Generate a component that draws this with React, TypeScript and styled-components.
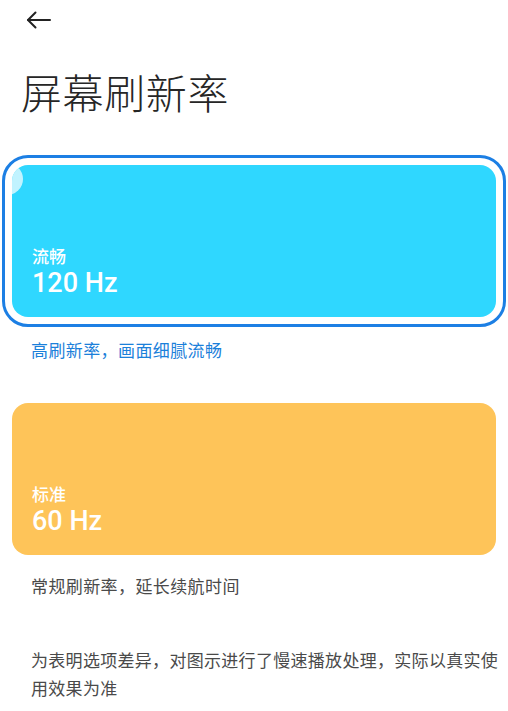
import styled, { createGlobalStyle } from "styled-components";

const GlobalStyle = createGlobalStyle`
    html, body {
        margin: 0;
        padding: 0;
        background: #ffffff;
    }
    body {
        font-family: Roboto, "Noto Sans", "Noto Sans CJK SC", sans-serif;
        -webkit-font-smoothing: antialiased;
    }
`

const Page = styled.div`
    width: 508px;
    min-height: 711px;
    box-sizing: border-box;
    padding: 0 12px;
    color: #222;
`

const Header = styled.div`
    display: flex;
    align-items: center;
    height: 20px;
    padding: 10px 0 0 14px;
`

const BackButton = styled.button`
    display: flex;
    padding: 0;
    border: none;
    background: none;
    color: #222;
    cursor: pointer;
`

const Title = styled.h1`
    margin: 37px 0 0 9px;
    font-family: "Noto Sans CJK SC", sans-serif;
    font-size: 41px;
    line-height: 48px;
    font-weight: 300;
    letter-spacing: 0.6px;
    color: #262626;
`

const Ring = styled.div<{ $active: boolean }>`
    margin: ${p => p.$active ? "40px -10px 0" : "42px 0 0"};
    padding: ${p => p.$active ? "7px" : "0"};
    border: ${p => p.$active ? "3px solid #1c7fe4" : "none"};
    border-radius: 26px;
`

const Card = styled.div<{ $color: string, $bubble?: boolean }>`
    position: relative;
    overflow: hidden;
    height: 152px;
    box-sizing: border-box;
    display: flex;
    flex-direction: column;
    justify-content: flex-end;
    padding: 0 20px 18px;
    border-radius: 16px;
    background: ${p => p.$color};
    color: #fff;
    &::before {
        content: "";
        display: ${p => p.$bubble ? "block" : "none"};
        position: absolute;
        left: -21px;
        top: -2px;
        width: 32px;
        height: 32px;
        border-radius: 50%;
        background: rgba(230, 250, 255, 0.8);
    }
`

const Label = styled.div`
    font-family: "Noto Sans CJK SC", sans-serif;
    font-size: 17px;
    line-height: 22px;
    font-weight: 500;
`

const Value = styled.div`
    font-family: Roboto, "Noto Sans", sans-serif;
    font-size: 27px;
    line-height: 32px;
    font-weight: 500;
`

const Caption = styled.p<{ $accent?: boolean }>`
    margin: ${p => p.$accent ? "12px" : "20px"} 0 0 19px;
    font-family: "Noto Sans CJK SC", sans-serif;
    font-size: 17px;
    line-height: 22px;
    letter-spacing: 0.4px;
    color: ${p => p.$accent ? "#1b80da" : "#4a4a4a"};
`

const Note = styled.p`
    width: 470px;
    margin: 49px 0 0 19px;
    font-family: "Noto Sans CJK SC", sans-serif;
    font-size: 17px;
    line-height: 28px;
    letter-spacing: 0.3px;
    color: #4a4a4a;
`

function ArrowLeft() {
    return <svg width="26" height="18" viewBox="0 0 26 18" fill="none" stroke="currentColor" strokeWidth="2" strokeLinecap="round" strokeLinejoin="round">
        <path d="M24 9H2" />
        <path d="M9.5 1.5L2 9l7.5 7.5" />
    </svg>
}

const modes = [
    { label: "流畅", hz: "120 Hz", color: "#2fd7ff", desc: "高刷新率，画面细腻流畅", active: true },
    { label: "标准", hz: "60 Hz", color: "#fec459", desc: "常规刷新率，延长续航时间", active: false },
]

export default function App() {
    return <>
        <GlobalStyle />
        <Page>
            <Header>
                <BackButton aria-label="back"><ArrowLeft /></BackButton>
            </Header>
            <Title>屏幕刷新率</Title>
            {
                modes.map(m =>
                    <div key={m.hz}>
                        <Ring $active={m.active}>
                            <Card $color={m.color} $bubble={m.active}>
                                <Label>{m.label}</Label>
                                <Value>{m.hz}</Value>
                            </Card>
                        </Ring>
                        <Caption $accent={m.active}>{m.desc}</Caption>
                    </div>
                )
            }
            <Note>为表明选项差异，对图示进行了慢速播放处理，实际以真实使用效果为准</Note>
        </Page>
    </>
}
